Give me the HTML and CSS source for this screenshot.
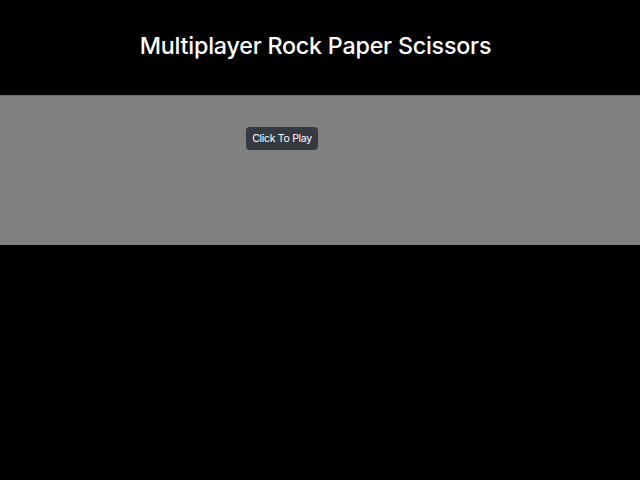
FILE: index.html
```html
<!DOCTYPE html>
<html>
<head>
<meta charset="utf-8">
<link rel="stylesheet" href="styles.css">
</head>
<body>
<header class="header">
  <h1 class="title">Multiplayer Rock Paper Scissors</h1>
</header>
<section class="stage">
  <button class="play-btn">Click To Play</button>
</section>
</body>
</html>
```
FILE: styles.css
```css
html, body {
  margin: 0;
  padding: 0;
  background: #000;
  height: 100%;
}
body {
  font-family: Inter, "Liberation Sans", sans-serif;
}
.header {
  height: 95px;
  display: flex;
  justify-content: center;
  padding-right: 9px;
  box-sizing: border-box;
}
.title {
  margin: 32px 0 0;
  color: #fff;
  font-size: 23.3px;
  font-weight: 500;
  line-height: 28px;
  letter-spacing: -0.22px;
}
.stage {
  background: #808080;
  border-top: 1px solid #6e6e6e;
  height: 150px;
  padding: 30px 0 0 246px;
  box-sizing: border-box;
}
.play-btn {
  background: #343a40;
  color: #fff;
  border: none;
  border-radius: 4px;
  font-family: Inter, "Liberation Sans", sans-serif;
  font-size: 10.5px;
  letter-spacing: -0.3px;
  height: 23px;
  width: 72px;
  padding: 0;
}
```
